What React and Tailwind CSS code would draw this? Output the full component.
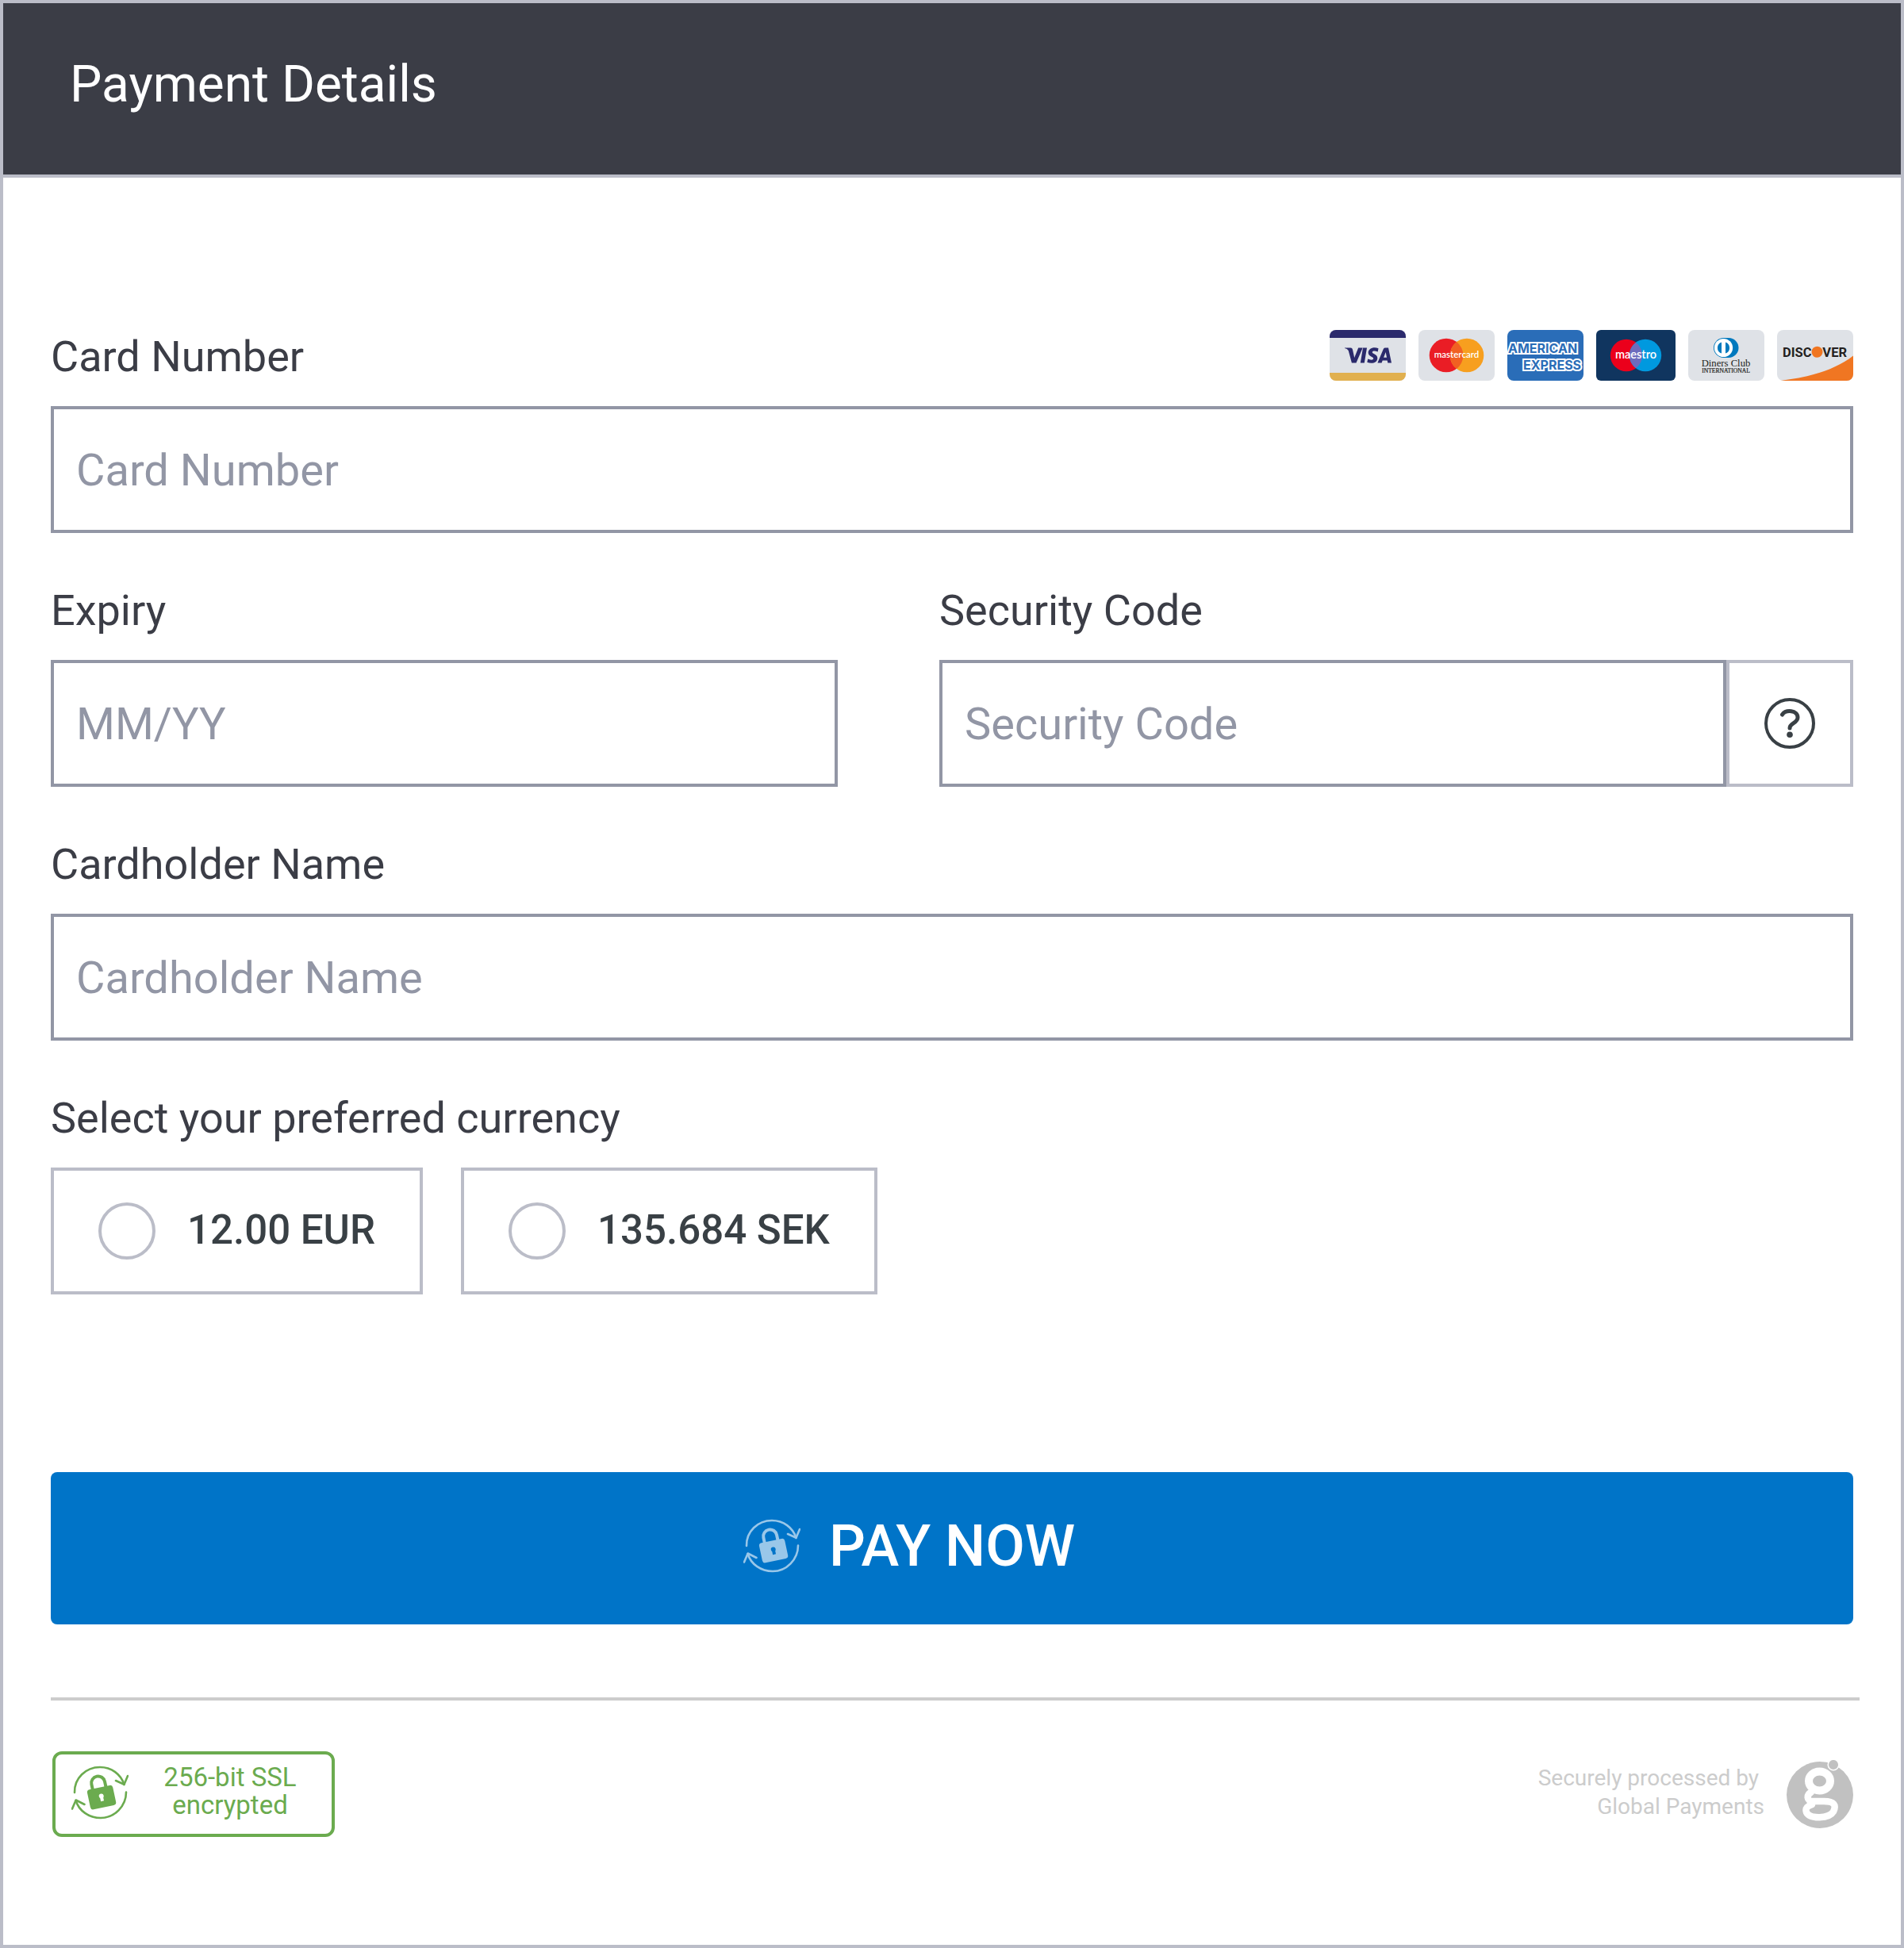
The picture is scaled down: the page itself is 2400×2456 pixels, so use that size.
import { useState } from 'react';

const VisaCard = () => (
    <svg viewBox="0 0 96 64" className="h-16 w-24" role="img" aria-label="Visa">
        <clipPath id="visa-clip"><rect width="96" height="64" rx="8" /></clipPath>
        <g clipPath="url(#visa-clip)">
            <rect width="96" height="64" fill="#dfe2e7" />
            <rect width="96" height="10" fill="#2b2a6c" />
            <rect y="54" width="96" height="10" fill="#e1b04f" />
        </g>
        <g fill="#2b2a6c">
            <path d="M19 22.500h7.500q2 0 2.500 2.200l2.200 10.300 5-12.500h5.500l-8.200 19h-5.600l-4.200-15.500q-1.500-2.500-4.700-3z" />
            <path d="M42 22.500h5l-3.200 19h-5z" />
            <path d="M61.500 23.200l-.8 4.200c-4.500-1.700-7-.8-7 .7 0 2.300 6.600 2.400 6.600 7.400 0 6.300-7.500 7.600-13 5.300l.9-4.300c3.400 1.700 7 1.500 7-.5 0-2.400-6.500-2.300-6.500-7.200 0-5.700 6.800-8 12.800-5.600z" />
            <path fillRule="evenodd" d="M69.700 22.500h4.300l4 19h-4.700l-.6-2.900h-6l-1.100 2.900h-5.200l7.300-17.300q.6-1.700 2-1.700zM70.700 28l-2.600 6.800h3.900z" />
        </g>
    </svg>
);

const MastercardCard = () => (
    <svg viewBox="0 0 96 64" className="h-16 w-24" role="img" aria-label="Mastercard">
        <rect width="96" height="64" rx="8" fill="#dfe2e7" />
        <circle cx="35" cy="32" r="21.300" fill="#ea1d25" />
        <circle cx="61" cy="32" r="21.300" fill="#f79f1f" />
        <path d="M48 15.100a21.300 21.300 0 0 1 0 33.800a21.300 21.300 0 0 1 0-33.800z" fill="#f16022" />
        <text x="48" y="35" textAnchor="middle" fontSize="11.500" fontWeight="600" fill="#fff" fontFamily="Lato, sans-serif">mastercard</text>
    </svg>
);

const AmexCard = () => (
    <svg viewBox="0 0 96 64" className="h-16 w-24" role="img" aria-label="American Express">
        <clipPath id="amex-clip"><rect width="96" height="64" rx="8" /></clipPath>
        <g clipPath="url(#amex-clip)" fontFamily="Inter, sans-serif" fontWeight="700" fontSize="16" fill="#2a6db8" stroke="#fff" strokeWidth="4" paintOrder="stroke">
            <rect width="96" height="64" stroke="none" />
            <text x="1" y="28.500">AMERICAN</text>
            <text x="20" y="50">EXPRESS</text>
        </g>
    </svg>
);

const MaestroCard = () => (
    <svg viewBox="0 0 100 64" className="h-16 w-25" role="img" aria-label="Maestro">
        <rect width="100" height="64" rx="6" fill="#10355f" />
        <circle cx="38" cy="32" r="20.200" fill="#eb001b" />
        <circle cx="62" cy="32" r="20.200" fill="#0099df" />
        <path d="M50 15.800a20.200 20.200 0 0 1 0 32.400a20.200 20.200 0 0 1 0-32.400z" fill="#6c6bbd" />
        <text x="50" y="35.500" textAnchor="middle" fontSize="14.500" fontWeight="600" fill="#fff" fontFamily="Lato, sans-serif">maestro</text>
    </svg>
);

const DinersCard = () => (
    <svg viewBox="0 0 96 64" className="h-16 w-24" role="img" aria-label="Diners Club International">
        <rect width="96" height="64" rx="8" fill="#dfe2e7" />
        <path d="M44.500 10h6.500a12.500 12.500 0 0 1 0 25h-6.500a12.500 12.500 0 0 1 0-25z" fill="#0079be" />
        <circle cx="44.500" cy="22.500" r="11.600" fill="#fff" />
        <path d="M42 15.400v14.200a7.500 7.500 0 0 1 0-14.200zM47 15.400v14.200a7.500 7.500 0 0 0 0-14.200z" fill="#0079be" />
        <text x="47.500" y="46" textAnchor="middle" fontSize="12.700" fill="#231f20" fontFamily="Liberation Serif, serif">Diners Club</text>
        <text x="47.500" y="54" textAnchor="middle" fontSize="7.600" fill="#231f20" stroke="#231f20" strokeWidth=".2" fontFamily="Liberation Serif, serif">INTERNATIONAL</text>
    </svg>
);

const DiscoverCard = () => (
    <svg viewBox="0 0 96 64" className="h-16 w-24" role="img" aria-label="Discover">
        <clipPath id="discover-clip"><rect width="96" height="64" rx="8" /></clipPath>
        <g clipPath="url(#discover-clip)">
            <rect width="96" height="64" fill="#dfe2e7" />
            <path d="M0 64.500C40 60 72 51 96 32.500V64.500z" fill="#f07622" />
        </g>
        <g fill="#231f20" fontFamily="Roboto, sans-serif" fontWeight="700" fontSize="16.500">
            <text x="7" y="34">DISC</text>
            <text x="88" y="34" textAnchor="end">VER</text>
        </g>
        <circle cx="50.500" cy="27.800" r="7" fill="#f07622" />
    </svg>
);

// lock inside two rotating arrows, takes the text colour
const SecureLock = () => (
    <svg viewBox="0 0 72 68" className="h-17 w-18 shrink-0" fill="none" stroke="currentColor" aria-hidden="true">
        <g strokeWidth="2.600" strokeLinecap="round" strokeLinejoin="round">
            <path d="M4 34C3.500 16 18 2 36 2c14.500 0 26.500 9 30.500 22" />
            <path d="M56 19l10.500 4.800L71 13" />
            <path d="M69 33.500C69 51 54.500 66 37 66 22 66 9.500 57 5.500 44" />
            <path d="M1 54.500l4.700-11L16.500 49" />
        </g>
        <g transform="rotate(-12 37 35)">
            <path d="M28 30V21.500a8.500 8.500 0 0 1 17 0V30" strokeWidth="4" />
            <path fill="currentColor" stroke="none" fillRule="evenodd" d="M24 27.500h26a3.500 3.500 0 0 1 3.500 3.500v18.500a3.500 3.500 0 0 1-3.500 3.500H24a3.500 3.500 0 0 1-3.500-3.500V31a3.500 3.500 0 0 1 3.500-3.500zM37 35.500a3 3 0 0 0-3 3q0 1.500 1 2.500v4h4v-4q1-1 1-2.500a3 3 0 0 0-3-3z" />
        </g>
    </svg>
);

const GlobalPaymentsLogo = () => (
    <svg viewBox="0 0 84 86" className="h-[86px] w-21" role="img" aria-label="Global Payments">
        <circle cx="42" cy="44" r="42" fill="#c1c1c1" />
        <circle cx="59" cy="6" r="6.800" fill="#c1c1c1" stroke="#fff" strokeWidth="1.500" />
        <g fill="none" stroke="#fff" strokeLinecap="round" strokeLinejoin="round">
            <ellipse cx="41.500" cy="26.500" rx="13.500" ry="12" strokeWidth="10" />
            <path strokeWidth="8.500" d="M31 40.500C25 44 25 52 33 52h14c13 0 16 5 12 13-5 9-30 10-34 1-2-6 2-8 7-10" />
        </g>
    </svg>
);

const cards = [VisaCard, MastercardCard, AmexCard, MaestroCard, DinersCard, DiscoverCard];

const currencies = [
    { id: 'eur', label: '12.00 EUR' },
    { id: 'sek', label: '135.684 SEK' },
];

const labelClass = 'mb-7 block text-[54px] leading-17 text-[#3b3d46]';
const inputClass = 'block h-40 w-full min-w-0 border-4 border-[#9296a5] bg-white px-7 pt-0.5 text-[56px] text-[#3b3d46] placeholder:text-[#9296a5] placeholder:opacity-100';

const Field = ({ id, label }) => (
    <div>
        <label htmlFor={id} className={labelClass}>{label}</label>
        <input id={id} type="text" placeholder={label} className={inputClass} />
    </div>
);

const App = () => {
    const [currency, setCurrency] = useState('');

    return (
        <main className="border-4 border-[#bbbdc8] bg-white font-[Roboto,sans-serif]">
            <header className="border-b-4 border-[#bbbdc8] bg-[#3b3d46] px-21 pt-[55px] pb-[65px]">
                <h1 className="text-[64px] leading-24 text-white">Payment Details</h1>
            </header>

            <form className="px-15 pt-48 pb-[136px]" onSubmit={(e) => e.preventDefault()}>
                <div className="flex flex-col gap-16">
                    <div>
                        <div className="flex items-start justify-between">
                            <label htmlFor="number" className={labelClass}>Card Number</label>
                            <div className="flex gap-4">
                                {cards.map((Card, i) => <Card key={i} />)}
                            </div>
                        </div>
                        <input id="number" type="text" placeholder="Card Number" className={inputClass} />
                    </div>

                    <div className="flex gap-32">
                        <div className="w-[calc((100%-288px)/2)]">
                            <label htmlFor="expiry" className={labelClass}>Expiry</label>
                            <input id="expiry" type="text" placeholder="MM/YY" className={inputClass} />
                        </div>
                        <div className="flex-1">
                            <label htmlFor="code" className={labelClass}>Security Code</label>
                            <div className="flex">
                                <input id="code" type="text" placeholder="Security Code" className={inputClass} />
                                <button type="button" aria-label="What is this?" className="flex size-40 shrink-0 items-center justify-center border-4 border-[#bbbdc8]">
                                    <svg viewBox="0 0 64 64" className="size-16" fill="none" stroke="#394045">
                                        <circle cx="32" cy="32" r="30" strokeWidth="4" />
                                        <path d="M22.500 21C27 14.500 42 15 42 24.500C42 32 32 31 32 38" strokeWidth="5" strokeLinecap="round" />
                                        <circle cx="32" cy="46.300" r="3.800" fill="#394045" stroke="none" />
                                    </svg>
                                </button>
                            </div>
                        </div>
                    </div>

                    <Field id="name" label="Cardholder Name" />

                    <fieldset>
                        <legend className={labelClass}>Select your preferred currency</legend>
                        <div className="flex gap-12">
                            {currencies.map(({ id, label }) => (
                                <label key={id} htmlFor={id} className="flex h-40 items-center gap-10 border-4 border-[#bbbdc8] px-14 text-[51px] leading-17 font-medium text-[#394045]">
                                    <input
                                        id={id}
                                        type="radio"
                                        name="currency"
                                        checked={currency === id}
                                        onChange={() => setCurrency(id)}
                                        className="size-18 appearance-none rounded-full border-4 border-[#bbbdc8] checked:border-[20px] checked:border-[#0074c8]"
                                    />
                                    <span className="pb-0.5">{label}</span>
                                </label>
                            ))}
                        </div>
                    </fieldset>
                </div>

                <button type="submit" className="mt-56 flex h-48 w-full items-center justify-center gap-9 rounded-lg bg-[#0074c8] pr-27 text-[72px] font-medium text-white">
                    <span className="pb-1.5 text-[#99c7e9]"><SecureLock /></span>
                    <span className="pb-1">PAY NOW</span>
                </button>

                <footer className="mt-23 -mr-2 border-t-4 border-[#cccccc] pt-16 pr-2">
                    <div className="flex items-center justify-between">
                        <div className="ml-0.5 flex h-27 w-[356px] items-center rounded-xl border-4 border-[#6bab4f] pb-1 pl-5 text-[#6bab4f]">
                            <SecureLock />
                            <p className="flex-1 pb-1 text-center text-[33px] leading-[35px]">256-bit SSL<br />encrypted</p>
                        </div>
                        <div className="flex items-center gap-7">
                            <p className="pb-1 text-right text-[28px] leading-9 text-[#cccccc]">Securely processed by&nbsp;<br />Global Payments</p>
                            <GlobalPaymentsLogo />
                        </div>
                    </div>
                </footer>
            </form>
        </main>
    );
};

export default App;
